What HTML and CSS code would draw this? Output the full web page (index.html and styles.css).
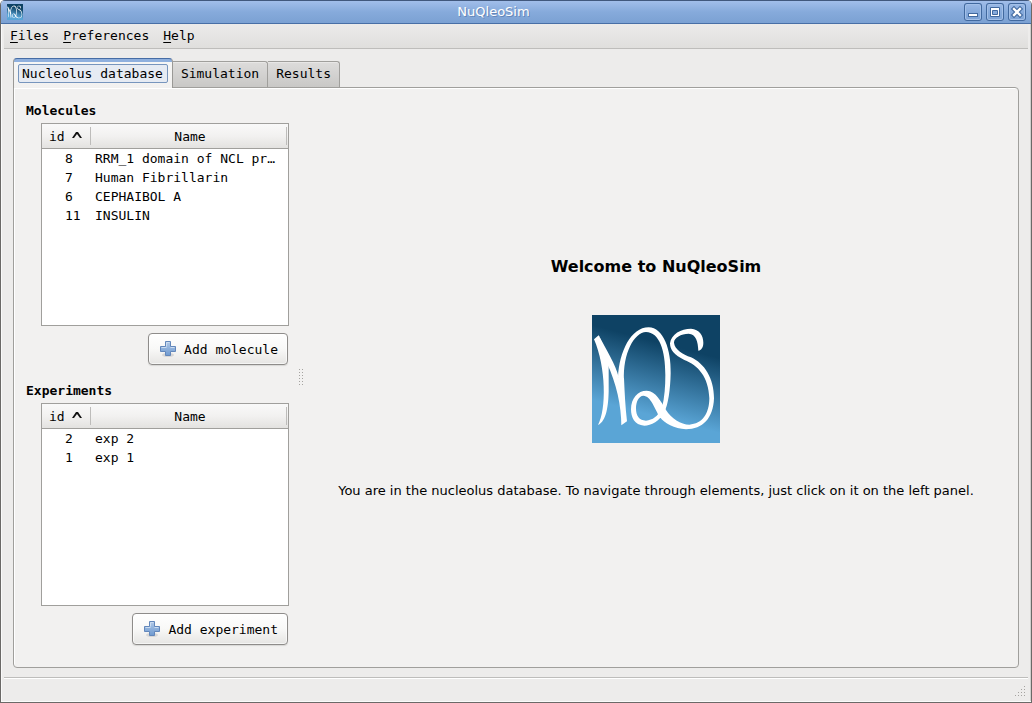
FILE: index.html
```html
<!DOCTYPE html>
<html lang="en">
<head>
<meta charset="utf-8">
<title>NuQleoSim</title>
<link rel="stylesheet" href="styles.css">
</head>
<body>
<svg class="defs" aria-hidden="true">
  <defs>
    <linearGradient id="sky" gradientUnits="userSpaceOnUse" x1="210" y1="95" x2="155" y2="305">
      <stop offset="0" stop-color="#0e4264"/>
      <stop offset="1" stop-color="#5aa5d6"/>
    </linearGradient>
    <linearGradient id="plusfill" x1="0" y1="0" x2="0" y2="1">
      <stop offset="0" stop-color="#b4cbe8"/>
      <stop offset="0.5" stop-color="#8fb1dc"/>
      <stop offset="1" stop-color="#6f9ad0"/>
    </linearGradient>
    <symbol id="logo" viewBox="18 15 384 384">
      <rect x="18" y="15" width="384" height="384" fill="url(#sky)"/>
      <g fill="#fff">
        <path d="M24 88L38 76L68 140V245C67 285 62 333 36 345C62 300 60 170 24 88Z"/>
        <path d="M38 76C60 118 90 165 98 202L114 205C116 250 118 290 123 334L106 346C106 290 92 220 62 158Z"/>
        <path d="M96 202C100 125 135 52 188 52C232 52 256 120 254 190C253 240 246 285 236 304L228 294C236 260 238 230 238 195C238 120 220 67 180 66C145 67 110 130 114 212Z"/>
        <path d="M236 304C222 335 195 347 175 347C145 345 135 322 135 298C135 265 155 242 182 242C210 243 225 275 240 300C255 325 285 344 310 344C350 342 370 310 370 265C368 200 335 165 295 150C265 135 252 120 252 100C256 72 285 56 315 56C340 58 352 75 352 98C352 112 346 120 337 122C336 95 330 72 308 71C285 72 264 82 264 98C266 118 290 133 315 142C355 160 384 205 384 265C382 325 350 358 300 358C265 356 235 340 222 322C205 295 195 258 172 257C158 258 150 275 150 295C150 318 160 332 180 332C200 330 215 320 228 294Z"/>
      </g>
    </symbol>
    <symbol id="plus" viewBox="0 0 16 16">
      <ellipse cx="8" cy="14" rx="6" ry="2" fill="#d6d6d6"/>
      <path d="M5.500 .5h5v5h5v5h-5v4h-5v-4h-5v-5h5z" fill="url(#plusfill)" stroke="#6287bb"/>
      <path d="M6.500 5.500v-4h3M1.500 6.500h5M10.500 6.500h4" fill="none" stroke="#cbdcf0"/>
    </symbol>
    <symbol id="sort" viewBox="0 0 10 6">
      <path d="M0 6L4 0H6L10 6H8L5 2L2 6Z" fill="#111"/>
    </symbol>
  </defs>
</svg>
<div class="window">
  <header class="titlebar">
    <svg class="app-icon" aria-hidden="true"><use href="#logo"/></svg>
    <h1 class="title">NuQleoSim</h1>
    <div class="controls">
      <button class="control" aria-label="Minimize"><svg viewBox="0 0 18 18"><rect x="4.500" y="10.500" width="9" height="3" fill="#fff" stroke="#41699f"/></svg></button>
      <button class="control" aria-label="Maximize"><svg viewBox="0 0 18 18"><path d="M4.500 4.500h9v9h-9z" fill="#fff" stroke="#41699f"/><path d="M6.500 7.500h5v4h-5z" fill="#86aadb" stroke="#41699f"/></svg></button>
      <button class="control" aria-label="Close"><svg viewBox="0 0 18 18"><path d="M6 6l6 6M12 6l-6 6" stroke="#41699f" stroke-width="4.500" stroke-linecap="square"/><path d="M6 6l6 6M12 6l-6 6" stroke="#fff" stroke-width="2.300" stroke-linecap="square"/></svg></button>
    </div>
  </header>
  <nav class="menubar">
    <button class="menu"><u>F</u>iles</button>
    <button class="menu"><u>P</u>references</button>
    <button class="menu"><u>H</u>elp</button>
  </nav>
  <main class="content">
    <div class="tabs" role="tablist">
      <button class="tab tab-active" role="tab" aria-selected="true"><span class="focus">Nucleolus database</span></button>
      <button class="tab" role="tab" aria-selected="false">Simulation</button>
      <button class="tab" role="tab" aria-selected="false">Results</button>
    </div>
    <div class="pane" role="tabpanel">
      <aside class="side">
        <section class="group">
          <h2 class="group-title">Molecules</h2>
          <div class="list">
            <table class="grid">
              <thead><tr><th class="col-id">id <svg class="sort" aria-hidden="true"><use href="#sort"/></svg></th><th>Name</th></tr></thead>
              <tbody>
                <tr><td class="col-id">8</td><td>RRM_1 domain of NCL pr…</td></tr>
                <tr><td class="col-id">7</td><td>Human Fibrillarin</td></tr>
                <tr><td class="col-id">6</td><td>CEPHAIBOL A</td></tr>
                <tr><td class="col-id">11</td><td>INSULIN</td></tr>
              </tbody>
            </table>
          </div>
          <button class="add"><svg class="plus" aria-hidden="true"><use href="#plus"/></svg>Add molecule</button>
        </section>
        <section class="group">
          <h2 class="group-title">Experiments</h2>
          <div class="list">
            <table class="grid">
              <thead><tr><th class="col-id">id <svg class="sort" aria-hidden="true"><use href="#sort"/></svg></th><th>Name</th></tr></thead>
              <tbody>
                <tr><td class="col-id">2</td><td>exp 2</td></tr>
                <tr><td class="col-id">1</td><td>exp 1</td></tr>
              </tbody>
            </table>
          </div>
          <button class="add"><svg class="plus" aria-hidden="true"><use href="#plus"/></svg>Add experiment</button>
        </section>
      </aside>
      <div class="splitter" role="separator"><svg class="dots" viewBox="0 0 4 16" aria-hidden="true"><path d="M.5 0v16M3.500 0v16" stroke="#a5a3a0" stroke-dasharray="1 2"/></svg></div>
      <section class="welcome">
        <h2 class="welcome-title">Welcome to NuQleoSim</h2>
        <svg class="logo" role="img" aria-label="NQS"><use href="#logo"/></svg>
        <p class="welcome-text">You are in the nucleolus database. To navigate through elements, just click on it on the left panel.</p>
      </section>
    </div>
  </main>
  <footer class="statusbar">
    <svg class="grip" viewBox="0 0 11 11" aria-hidden="true"><path d="M9 0h1v1h-1zM6 3h1v1h-1zM9 3h1v1h-1zM3 6h1v1h-1zM6 6h1v1h-1zM9 6h1v1h-1zM0 9h1v1h-1zM3 9h1v1h-1zM6 9h1v1h-1zM9 9h1v1h-1z" fill="#a5a3a0"/></svg>
  </footer>
</div>
</body>
</html>
```
FILE: styles.css
```css
* { box-sizing: border-box; }
body {
  margin: 0;
  background: #fff;
  color: #000;
  font-family: "DejaVu Sans Mono", monospace;
  font-size: 13px;
  line-height: 19px;
}
h1, h2, p { margin: 0; }
button {
  font: inherit;
  color: inherit;
  margin: 0;
  padding: 0;
  border: 0;
  background: none;
}
.defs { position: absolute; width: 0; height: 0; }

.window {
  display: flex;
  flex-direction: column;
  min-height: 100vh;
  background: #edeceb;
  border: 1px solid #6b6967;
  border-top: 0;
  border-radius: 5px 5px 0 0;
  overflow: hidden;
  box-shadow: inset 1px -1px #fafafa, inset -1px 0 #d0cfcd;
}
.titlebar {
  display: flex;
  align-items: center;
  height: 24px;
  padding: 0 5px 0 6px;
  border-top: 1px solid #41587d;
  border-bottom: 1px solid #486fa6;
  background: linear-gradient(#a1beea, #86aadb 50%, #7ba1d3);
}
.app-icon { width: 16px; height: 16px; }
.title {
  flex: 1;
  text-align: center;
  font: 13px/20px "DejaVu Sans", sans-serif;
  color: #fff;
  text-shadow: 1px 1px #6486b8;
}
.controls { display: flex; gap: 4px; }
.control {
  width: 18px;
  height: 18px;
  border-radius: 3px;
  box-shadow: inset 0 0 0 1px #41699f, inset 0 0 0 2px #a3c0e8;
}
.control svg { display: block; width: 18px; height: 18px; }

.menubar {
  display: flex;
  gap: 14px;
  height: 25px;
  margin: 0 3px;
  padding: 1px 6px 3px;
  border-bottom: 1px solid #bebdbb;
  background: linear-gradient(#ecebea, #e0dfdd);
}
.menu u { text-underline-offset: 2px; }

.content {
  flex: 1;
  display: flex;
  flex-direction: column;
  padding: 9px 12px 9px;
}
.tabs { display: flex; align-items: flex-end; height: 29px; }
.tab {
  height: 26px;
  padding: 0 8px 2px;
  border: 1px solid #a09f9c;
  border-left: 0;
  border-bottom: 0;
  border-radius: 0 3px 0 0;
  background: linear-gradient(#dddcdb, #c9c8c6);
  box-shadow: inset 0 1px #e8e7e6;
}
.tab-active {
  height: 30px;
  margin-bottom: -1px;
  padding: 0 4px 1px;
  z-index: 1;
  border: 1px solid #9a9996;
  border-top: 1px solid #476da5;
  border-bottom: 0;
  border-radius: 4px 4px 0 0;
  background: linear-gradient(#8fb0de 3px, #f6f6f5 3px, #f2f1f0);
  box-shadow: none;
}
.focus {
  display: block;
  padding: 0 4px 0 3px;
  border: 1px solid #7795bd;
  border-radius: 2px;
  line-height: 17px;
  background: #e6ebf3;
}
.pane {
  flex: 1;
  display: flex;
  padding: 12px 9px 22px 12px;
  border: 1px solid #a09f9c;
  border-radius: 0 4px 4px 4px;
  background: #f2f1f0;
  box-shadow: inset 1px 1px #fff;
}
.side {
  display: flex;
  flex-direction: column;
  gap: 15px;
  width: 262px;
}
.group { flex: 1; display: flex; flex-direction: column; }
.group-title { font-size: 13px; line-height: 21px; font-weight: bold; }
.list {
  flex: 1;
  margin: 2px 0 7px 15px;
  border: 1px solid #a09f9c;
  background: #fff;
  width: 248px;
}
.grid {
  width: 100%;
  table-layout: fixed;
  border-collapse: separate;
  border-spacing: 0;
}
.grid th {
  height: 25px;
  padding: 0;
  font-weight: normal;
  border-bottom: 1px solid #a09f9c;
  background:
    linear-gradient(#bdbcba, #bdbcba) right 1px center / 1px 18px no-repeat,
    linear-gradient(#f9f9f9, #f2f1f0 50%, #e3e2e0);
}
.grid .col-id { width: 50px; }
.grid th.col-id { padding-left: 7px; text-align: left; }
.sort { width: 10px; height: 6px; margin-bottom: 3px; }
.grid td {
  height: 19px;
  padding: 0 3px;
  overflow: hidden;
  text-overflow: ellipsis;
  white-space: nowrap;
}
.grid td.col-id { padding: 0 0 0 23px; }
.add {
  display: flex;
  align-items: center;
  align-self: flex-end;
  gap: 8px;
  height: 32px;
  padding: 0 9px 0 11px;
  border: 1px solid #8e8c8a;
  border-radius: 4px;
  background: linear-gradient(#fff, #f8f8f7 50%, #e6e5e3);
  box-shadow: inset 0 0 0 1px #fff9, 0 1px 1px #d8d7d5;
}
.plus { width: 16px; height: 16px; }
.splitter {
  align-self: center;
  width: 4px;
  margin: 9px 0 0 11px;
}
.dots { display: block; width: 4px; height: 16px; }
.welcome {
  flex: 1;
  display: flex;
  flex-direction: column;
  align-items: center;
  justify-content: center;
  padding-top: 13px;
}
.welcome-title { font: bold 16px/20px "DejaVu Sans", sans-serif; }
.logo { width: 128px; height: 128px; margin: 38px 0; }
.welcome-text { font: 13px/20px "DejaVu Sans", sans-serif; }

.statusbar {
  display: flex;
  justify-content: flex-end;
  align-items: flex-end;
  height: 25px;
  margin: 0 3px;
  padding: 0 2px 5px;
  border-top: 1px solid #bebdbb;
  box-shadow: inset 0 1px #fff;
}
.grip { width: 11px; height: 11px; }
```
